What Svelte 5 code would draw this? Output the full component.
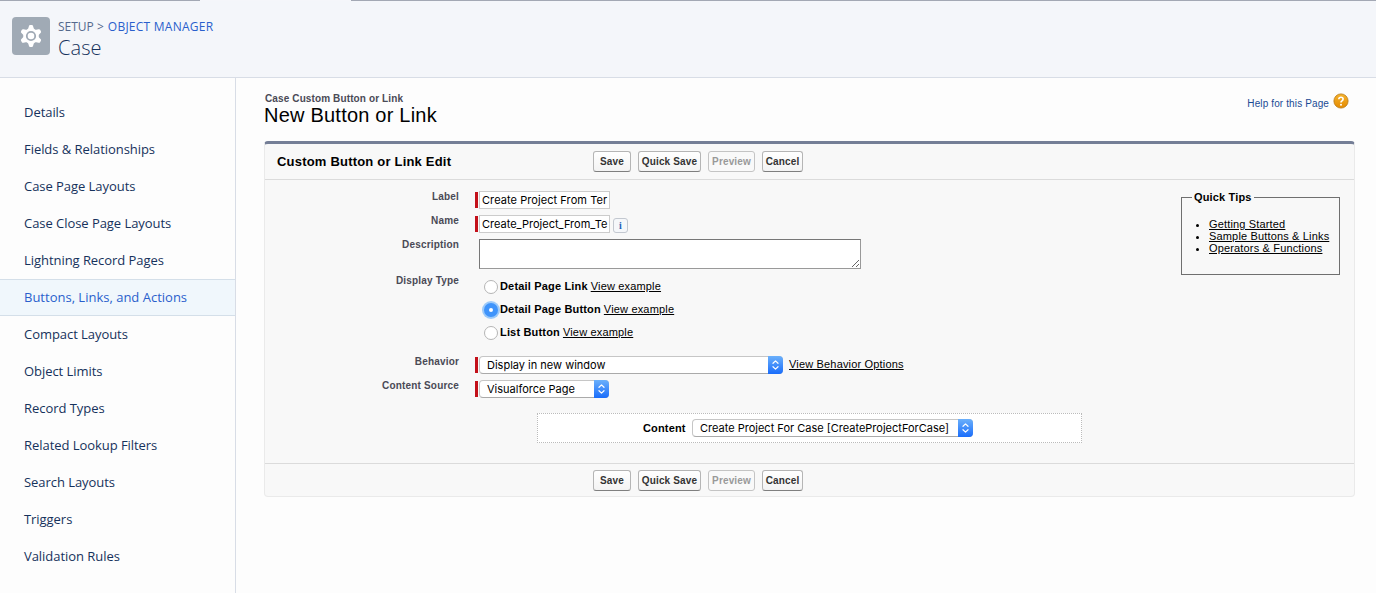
<script>
  const items = [
    'Details', 'Fields & Relationships', 'Case Page Layouts', 'Case Close Page Layouts',
    'Lightning Record Pages', 'Buttons, Links, and Actions', 'Compact Layouts', 'Object Limits',
    'Record Types', 'Related Lookup Filters', 'Search Layouts', 'Triggers', 'Validation Rules'
  ];
  const active = 'Buttons, Links, and Actions';
  const types = [
    { name: 'Detail Page Link', on: false },
    { name: 'Detail Page Button', on: true },
    { name: 'List Button', on: false }
  ];
  const tips = ['Getting Started', 'Sample Buttons & Links', 'Operators & Functions'];
</script>

{#snippet buttons()}
  <button class="btn save">Save</button>
  <button class="btn quick">Quick Save</button>
  <button class="btn preview" disabled>Preview</button>
  <button class="btn cancel">Cancel</button>
{/snippet}

{#snippet select(text, kind)}
  <div class="select {kind}">
    <span class="value">{text}</span>
    <span class="arrows">
      <svg width="15" height="18" viewBox="0 0 15 18" fill="none" stroke="#fff" stroke-width="1.2" stroke-linecap="round" stroke-linejoin="round">
        <path d="M5 7.3 7.5 4.9 10 7.3M5 10.7 7.5 13.1 10 10.7" />
      </svg>
    </span>
  </div>
{/snippet}

<div class="page">
  <div class="topline"><i></i><i></i><i></i></div>
  <header>
    <div class="gear">
      <svg width="38" height="38" viewBox="0 0 38 38">
        <g fill="#fff">
          {#each [0, 60, 120, 180, 240, 300] as a}
            <path d="M15.9 12.6 16.9 9.2Q17.1 8 18.2 8H19.8Q20.9 8 21.1 9.2L22.1 12.6Z" transform="rotate({a} 19 19)" />
          {/each}
          <circle cx="19" cy="19" r="7.8" />
        </g>
        <circle cx="19" cy="19" r="4.2" fill="#fff" stroke="#a0aab5" stroke-width="1.8" />
      </svg>
    </div>
    <div class="titles">
      <div class="crumb"><span class="setup">SETUP &gt;</span><a class="om">OBJECT MANAGER</a></div>
      <h1>Case</h1>
    </div>
  </header>
  <div class="columns">
    <nav>
      {#each items as item}
        <a class:active={item === active}><span>{item}</span></a>
      {/each}
    </nav>
    <main>
      <div class="heading">
        <div>
          <div class="kicker"><span>Case Custom Button or Link</span></div>
          <h2><span>New Button or Link</span></h2>
        </div>
        <div class="help">
          <span>Help for this Page</span>
          <svg width="16" height="16" viewBox="0 0 16 16">
            <defs><linearGradient id="orange" x1="0" y1="0" x2="0" y2="1"><stop offset="0" stop-color="#f5b32e" /><stop offset="1" stop-color="#e48a00" /></linearGradient></defs>
            <circle cx="8" cy="8" r="7.1" fill="url(#orange)" stroke="#b9770f" stroke-width=".8" />
            <path d="M5.8 6.2Q5.9 4.2 8 4.2T10.1 6Q10.1 7.1 9 7.8T8 9.5" fill="none" stroke="#fff" stroke-width="1.6" />
            <circle cx="8" cy="11.8" r="1" fill="#fff" />
          </svg>
        </div>
      </div>
      <section class="panel">
        <div class="bar top"><h3><span>Custom Button or Link Edit</span></h3>{@render buttons()}</div>
        <div class="body">
          <div class="form">
            <div class="row"><label>Label</label><i class="req"></i><div class="input"><span>Create Project From Ter</span></div></div>
            <div class="row"><label>Name</label><i class="req"></i><div class="input"><span class="nm">Create_Project_From_Te</span></div><b class="info">i</b></div>
            <div class="row desc"><label>Description</label><i class="req none"></i>
              <div class="area"><svg width="9" height="9" viewBox="0 0 9 9" stroke="#666" stroke-width="1"><path d="M1 8 8 1M5 8 8 5" /></svg></div>
            </div>
            <div class="row types"><label>Display Type</label><i class="req none"></i>
              <div class="radios">
                {#each types as t}
                  <div class="radio"><i class:on={t.on}></i><b>{t.name}</b><a>View example</a></div>
                {/each}
              </div>
            </div>
            <div class="row sel"><label>Behavior</label><i class="req"></i>{@render select('Display in new window', 'wide')}<a class="opts">View Behavior Options</a></div>
            <div class="row sel"><label>Content Source</label><i class="req"></i>{@render select('Visualforce Page', 'short')}</div>
            <div class="content"><b>Content</b>{@render select('Create Project For Case [CreateProjectForCase]', 'mid')}</div>
          </div>
          <fieldset>
            <legend>Quick Tips</legend>
            <ul>
              {#each tips as tip}<li><a>{tip}</a></li>{/each}
            </ul>
          </fieldset>
        </div>
        <div class="bar bottom">{@render buttons()}</div>
      </section>
    </main>
  </div>
</div>

<style>
  :global(body) { margin: 0; background: #fdfdfd; }
  * { box-sizing: border-box; }
  .page { width: 1376px; height: 593px; overflow: hidden; display: flex; flex-direction: column; font: 11px/12px "Liberation Sans", Arial, sans-serif; color: #000; white-space: nowrap; }
  .topline { display: grid; grid-template-columns: 200px 151px 1fr; height: 1px; }
  .topline i { background: #a3a8b4; }
  .topline i:nth-child(2) { background: #f5f6fa; }
  header { height: 77px; background: #f4f6fa; border-bottom: 1px solid #d8dde6; display: flex; padding: 16px 12px 0; gap: 8px; }
  .gear { width: 38px; height: 38px; border-radius: 4px; background: #a0aab5; }
  .titles { font-family: "Open Sans", "Noto Sans", sans-serif; color: #16325c; }
  .crumb { display: flex; gap: 4px; font-size: 12px; line-height: 18px; padding-top: 1px; }
  .setup { color: #54698d; letter-spacing: 0; }
  .om { color: #2a5fcc; letter-spacing: .25px; }
  h1 { margin: 0; font-size: 20px; line-height: 24px; font-weight: 300; letter-spacing: .1px; }
  .columns { display: flex; flex: 1; }
  nav { flex: 0 0 236px; border-right: 1px solid #d8dde6; padding-top: 16px; }
  nav a { display: flex; align-items: center; height: 37px; padding: 0 0 2px 24px; font: 13px/18px "Open Sans", "Noto Sans", sans-serif; letter-spacing: -.05px; color: #16325c; border: solid transparent; border-width: 1px 0; }
  nav a.active { background: #f0f7fc; border-color: #d4dfe9; color: #2a5fcc; letter-spacing: 0; }
  main { flex: 1; padding: 15px 21px 0 28px; }
  .heading { display: flex; justify-content: space-between; height: 48px; padding-left: 1px; }
  .kicker { font-weight: bold; font-size: 10px; line-height: 11px; color: #4a4a56; letter-spacing: .12px; }
  h2 { margin: 0 0 0 -1px; font-size: 20px; font-weight: 400; line-height: 22px; letter-spacing: .22px; }
  .help { display: flex; color: #1a4a94; padding-right: 6px; gap: 4px; }
  .help span { padding-top: 5px; font-size: 10px; letter-spacing: .12px; }
  .panel { border: 1px solid #eaeaea; border-top: 3px solid #747e96; border-radius: 4px; background: #f8f8f8; height: 356px; width: 1091px; }
  .bar { display: flex; align-items: center; }
  .top { height: 36px; border-bottom: 1px solid #dbdbdb; }
  .bottom { height: 34px; border-top: 1px solid #dbdbdb; padding-left: 328px; }
  h3 { margin: 0; width: 328px; padding-left: 12px; font-size: 13px; letter-spacing: .2px; }
  .btn { height: 21px; padding: 0; border: 1px solid #b5b5b5; border-bottom-color: #7f7f7f; border-radius: 3px; background: linear-gradient(#fff, #f3f3f3); font: bold 10px/17px "Liberation Sans", Arial, sans-serif; letter-spacing: .15px; color: #333; margin-right: 7px; }
  .save { width: 38px; }
  .quick { width: 63px; }
  .preview { width: 47px; color: #999; border-color: #c4c4c4; background: #f9f9f9; }
  .cancel { width: 41px; }
  .body { display: flex; height: 283px; }
  .form { width: 916px; padding-top: 8px; }
  .row { display: flex; align-items: flex-start; height: 24px; }
  label { width: 194px; padding-top: 3px; margin-right: 16px; text-align: right; font-weight: bold; font-size: 10px; letter-spacing: .18px; color: #4a4a56; }
  .req { width: 3px; height: 16px; margin: 4px 1px 0 0; background: #c3101a; }
  .none { background: none; }
  .input { width: 131px; height: 18px; margin-top: 3px; background: #fff; border: 1px solid #ccc; padding: 0 2px; font: 11px/17px Inter, sans-serif; letter-spacing: .07px; overflow: hidden; }
  .nm { letter-spacing: 0; }
  .info { width: 15px; height: 15px; margin: 6px 0 0 3px; border: 1px solid #c3c8d0; border-radius: 3px; background: #f5f7fa; color: #1d5fb8; font: bold 10px/13px "Liberation Serif", serif; text-align: center; }
  .desc { height: 36px; }
  .area { width: 382px; height: 30px; margin-top: 3px; background: #fff; border: 1px solid #777; border-color: #777 #999 #999 #777; display: flex; justify-content: flex-end; align-items: flex-end; }
  .types { height: 81px; }
  .radios { padding: 3px 0 0 5px; }
  .radio { display: flex; align-items: center; height: 23px; letter-spacing: .17px; padding-bottom: 1px; }
  .radio i { width: 14px; height: 14px; border: 1px solid #b5b5b5; border-radius: 50%; background: #fff; margin: 2px 2px 0 0; }
  .radio i.on { border: 5px solid #3f94fb; box-shadow: 0 0 0 2px #9ccafa; }
  .radio a { margin-left: 3px; }
  .radio a, .opts, li a { text-decoration: underline; }
  .select { display: flex; height: 18px; margin-top: 3px; background: #fff; border: 1px solid #c6c6c6; border-bottom-color: #aaa; border-radius: 4px; font: 11px/17px Inter, sans-serif; }
  .value { flex: 1; padding-left: 7px; }
  .arrows { width: 15px; height: 18px; margin: -1px -1px 0 0; border-radius: 0 4px 4px 0; background: linear-gradient(#6bb0fb, #1a6dfb); }
  .arrows svg { display: block; }
  .wide { width: 304px; }
  .short { width: 130px; }
  .mid { width: 281px; margin: 0; }
  .opts { margin: 5px 0 0 6px; letter-spacing: .17px; }
  .content { margin: 12px 0 0 272px; width: 545px; height: 30px; border: 1px dotted #bbb; background: #fff; display: flex; align-items: center; padding-left: 105px; }
  .content b { width: 49px; letter-spacing: .15px; }
  fieldset { margin: 11px 0 0; width: 159px; height: 84px; border: 1px solid #6f6f6f; box-shadow: none; padding: 0 0 0 10px; }
  legend { font-weight: bold; font-size: 11px; line-height: 13px; padding: 0 2px; letter-spacing: .15px; }
  ul { margin: 14px 0 0; padding-left: 17px; letter-spacing: .16px; }
</style>
